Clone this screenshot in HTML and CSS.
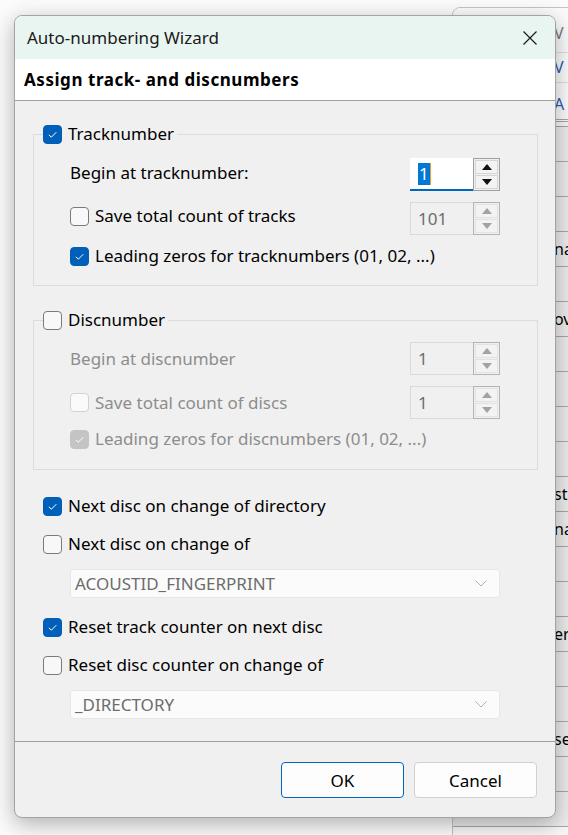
FILE: index.html
```html
<!DOCTYPE html>
<html lang="en">

<head>
    <meta charset="utf-8">
    <meta name="viewport" content="width=device-width, initial-scale=1.0">
    <title>Auto-numbering Wizard</title>
    <link rel="stylesheet" href="styles.css">
</head>

<body>

    <!-- window behind the dialog, only a strip of it is visible -->
    <div class="backwin">
        <div class="bw-head">
            <div class="bw-line bw-first"><span class="grey">V</span></div>
            <div class="bw-line"><span class="blue">V</span></div>
            <div class="bw-line bw-tool"><span class="blue">A</span></div>
        </div>
        <div class="bw-list">
            <div class="bw-row"></div>
            <div class="bw-row"></div>
            <div class="bw-row"></div>
            <div class="bw-row"><span>na</span></div>
            <div class="bw-row"></div>
            <div class="bw-row"><span>ov</span></div>
            <div class="bw-row"></div>
            <div class="bw-row"></div>
            <div class="bw-row"></div>
            <div class="bw-row"></div>
            <div class="bw-row"><span>st</span></div>
            <div class="bw-row"><span>na</span></div>
            <div class="bw-row"></div>
            <div class="bw-row"></div>
            <div class="bw-row"><span>er</span></div>
            <div class="bw-row"></div>
            <div class="bw-row"></div>
            <div class="bw-row"><span>se</span></div>
            <div class="bw-row"></div>
            <div class="bw-row"></div>
        </div>
        <div class="bw-panel"></div>
    </div>

    <div class="dialog">
        <div class="titlebar">
            <span>Auto-numbering Wizard</span>
            <svg class="close" width="16" height="16" viewBox="0 0 16 16">
                <path d="M1.5 1.5 L14.5 14.5 M14.5 1.5 L1.5 14.5" stroke="#1a1a1a" stroke-width="1.2" fill="none" />
            </svg>
        </div>

        <div class="banner">Assign track- and discnumbers</div>

        <div class="content">
            <fieldset class="group group-track">
                <legend>
                    <span class="check"><span class="box on"><svg width="19" height="19" viewBox="0 0 19 19"><path d="M5.8 9.8 L8.3 12.2 L13.3 7.2" stroke="#fff" stroke-width="1" fill="none" /></svg></span>Tracknumber</span>
                </legend>
                <div class="rows">
                    <div class="row">
                        <span class="label">Begin at tracknumber:</span>
                        <div class="spin">
                            <div class="spin-input active"><span class="sel">1</span></div>
                            <div class="spin-btns">
                                <span class="sbtn"><svg width="10" height="6" viewBox="0 0 10 6"><polygon points="0,6 5,0 10,6" fill="#111" /></svg></span>
                                <span class="sbtn"><svg width="10" height="6" viewBox="0 0 10 6"><polygon points="0,0 5,6 10,0" fill="#111" /></svg></span>
                            </div>
                        </div>
                    </div>
                    <div class="row row-gap">
                        <span class="check"><span class="box"></span>Save total count of tracks</span>
                        <div class="spin off">
                            <div class="spin-input">101</div>
                            <div class="spin-btns">
                                <span class="sbtn"><svg width="10" height="6" viewBox="0 0 10 6"><polygon points="0,6 5,0 10,6" fill="#a3a3a3" /></svg></span>
                                <span class="sbtn"><svg width="10" height="6" viewBox="0 0 10 6"><polygon points="0,0 5,6 10,0" fill="#a3a3a3" /></svg></span>
                            </div>
                        </div>
                    </div>
                    <div class="row row-last">
                        <span class="check"><span class="box on"><svg width="19" height="19" viewBox="0 0 19 19"><path d="M5.8 9.8 L8.3 12.2 L13.3 7.2" stroke="#fff" stroke-width="1" fill="none" /></svg></span>Leading zeros for tracknumbers (01, 02, ...)</span>
                    </div>
                </div>
            </fieldset>

            <fieldset class="group group-disc">
                <legend>
                    <span class="check"><span class="box"></span>Discnumber</span>
                </legend>
                <div class="rows disabled">
                    <div class="row">
                        <span class="label">Begin at discnumber</span>
                        <div class="spin off">
                            <div class="spin-input">1</div>
                            <div class="spin-btns">
                                <span class="sbtn"><svg width="10" height="6" viewBox="0 0 10 6"><polygon points="0,6 5,0 10,6" fill="#a3a3a3" /></svg></span>
                                <span class="sbtn"><svg width="10" height="6" viewBox="0 0 10 6"><polygon points="0,0 5,6 10,0" fill="#a3a3a3" /></svg></span>
                            </div>
                        </div>
                    </div>
                    <div class="row row-gap">
                        <span class="check"><span class="box"></span>Save total count of discs</span>
                        <div class="spin off">
                            <div class="spin-input">1</div>
                            <div class="spin-btns">
                                <span class="sbtn"><svg width="10" height="6" viewBox="0 0 10 6"><polygon points="0,6 5,0 10,6" fill="#a3a3a3" /></svg></span>
                                <span class="sbtn"><svg width="10" height="6" viewBox="0 0 10 6"><polygon points="0,0 5,6 10,0" fill="#a3a3a3" /></svg></span>
                            </div>
                        </div>
                    </div>
                    <div class="row row-last">
                        <span class="check"><span class="box on"><svg width="19" height="19" viewBox="0 0 19 19"><path d="M5.8 9.8 L8.3 12.2 L13.3 7.2" stroke="#fff" stroke-width="1" fill="none" /></svg></span>Leading zeros for discnumbers (01, 02, ...)</span>
                    </div>
                </div>
            </fieldset>

            <div class="opt opt-first">
                <span class="check"><span class="box on"><svg width="19" height="19" viewBox="0 0 19 19"><path d="M5.8 9.8 L8.3 12.2 L13.3 7.2" stroke="#fff" stroke-width="1" fill="none" /></svg></span>Next disc on change of directory</span>
            </div>
            <div class="opt">
                <span class="check"><span class="box"></span>Next disc on change of</span>
            </div>
            <div class="combo">
                <span>ACOUSTID_FINGERPRINT</span>
                <svg width="12" height="7" viewBox="0 0 12 7"><path d="M0.5 0.5 L6 6 L11.5 0.5" stroke="#b0b0b0" stroke-width="1" fill="none" /></svg>
            </div>
            <div class="opt opt-after">
                <span class="check"><span class="box on"><svg width="19" height="19" viewBox="0 0 19 19"><path d="M5.8 9.8 L8.3 12.2 L13.3 7.2" stroke="#fff" stroke-width="1" fill="none" /></svg></span>Reset track counter on next disc</span>
            </div>
            <div class="opt">
                <span class="check"><span class="box"></span>Reset disc counter on change of</span>
            </div>
            <div class="combo">
                <span>_DIRECTORY</span>
                <svg width="12" height="7" viewBox="0 0 12 7"><path d="M0.5 0.5 L6 6 L11.5 0.5" stroke="#b0b0b0" stroke-width="1" fill="none" /></svg>
            </div>
        </div>

        <div class="footer">
            <button class="btn btn-default">OK</button>
            <button class="btn">Cancel</button>
        </div>
    </div>

</body>

</html>
```

FILE: styles.css
```css
html,
body {
    margin: 0;
    height: 100%;
    overflow: hidden;
}

body {
    position: relative;
    background-color: #fbfbfb;
    font-family: "Noto Sans", "Open Sans", sans-serif;
    font-size: 17px;
    color: #000;
}

/* window in the background */
.backwin {
    position: absolute;
    left: 452px;
    top: 7px;
    width: 115px;
    height: 860px;
    overflow: hidden;
    background-color: #f7f7f7;
    border: 1px solid #c4c4c4;
    border-radius: 8px 0 0 0;
    font-size: 16px;
}

.bw-head {
    background-color: #fbfbfb;
    border-bottom: 3px double #a6a6a6;
}

.bw-line {
    height: 29px;
    padding-left: 101px;
    line-height: 29px;
    border-bottom: 1px solid #dedede;
}

.bw-first {
    height: 44px;
    line-height: 50px;
}

.bw-tool {
    height: 36px;
    line-height: 42px;
    border-bottom: none;
}

.grey {
    color: #777;
}

.blue {
    color: #2a5db0;
}

.bw-list {
    margin-top: 4px;
    border-top: 1px solid #a6a6a6;
}

.bw-row {
    height: 34px;
    padding-left: 101px;
    line-height: 34px;
    background-color: #ececec;
    border-bottom: 1px solid #a8a8a8;
}

/* dialog */
.dialog {
    position: absolute;
    left: 14px;
    top: 15px;
    width: 542px;
    height: 803px;
    box-sizing: border-box;
    display: flex;
    flex-direction: column;
    background-color: #f0f0f0;
    border: 1px solid #a3a3a3;
    border-radius: 8px;
    overflow: hidden;
    box-shadow: 0 6px 22px rgba(0, 0, 0, 0.3);
}

.titlebar {
    height: 43px;
    display: flex;
    align-items: center;
    justify-content: space-between;
    padding: 0 17px 0 12px;
    background-color: #e9f5f0;
    color: #1a1a1a;
}

.close {
    display: block;
}

.banner {
    height: 41px;
    line-height: 41px;
    padding-left: 9px;
    background-color: #fff;
    border-bottom: 1px solid #a0a0a0;
    font-weight: bold;
    letter-spacing: 0.55px;
}

.content {
    flex: 1;
    padding: 0 17px 0 18px;
}

.group {
    margin: 22px 0 0 0;
    padding: 0;
    border: 1px solid #dcdcdc;
    min-width: 0;
}

.group legend {
    margin-left: 9px;
    padding: 0 3px 0 0;
    line-height: 22px;
}

.group-disc {
    margin-top: 23px;
}

.rows {
    padding: 13px 37px 18px 36px;
}

.group-disc .rows {
    padding-top: 11px;
    padding-bottom: 19px;
}

.row {
    height: 33px;
    display: flex;
    align-items: center;
    justify-content: space-between;
}

.group-track .row > .label,
.group-track .row > .check {
    margin-bottom: 5px;
}

.group-track .row-last > .check {
    margin-bottom: 0;
}

.row-gap {
    margin-top: 11px;
}

.row-last {
    height: 22px;
    margin-top: 10px;
}

.group-disc .row-last {
    margin-top: 9px;
}

.disabled .label,
.disabled .check {
    color: #8d8d8d;
}

.check {
    display: flex;
    align-items: center;
    gap: 6px;
    line-height: 22px;
}

.box {
    width: 19px;
    height: 19px;
    box-sizing: border-box;
    border: 1px solid #7a7a7a;
    border-radius: 4px;
    background-color: #f8f8f8;
}

.box svg {
    display: block;
    margin: -1px;
}

.box.on {
    border-color: #005fb8;
    background-color: #005fb8;
}

.disabled .box {
    border-color: #d2d2d2;
    background-color: #fafafa;
}

.disabled .box.on {
    border-color: #c4c4c4;
    background-color: #c4c4c4;
}

/* spin boxes */
.spin {
    display: flex;
    height: 33px;
}

.spin-input {
    width: 63px;
    box-sizing: border-box;
    padding-left: 7px;
    display: flex;
    align-items: center;
    background-color: #f0f0f0;
    border: 1px solid #dadada;
    border-right: none;
    color: #6d6d6d;
}

.spin-input.active {
    background-color: #fff;
    border: none;
    border-bottom: 2px solid #0067c0;
    padding-left: 8px;
}

.sel {
    background-color: #0078d4;
    color: #fff;
    padding: 0 1px;
    line-height: 22px;
    box-shadow: 1px 0 0 #f39a2b;
}

.spin-btns {
    width: 27px;
    box-sizing: border-box;
    display: flex;
    flex-direction: column;
    gap: 1px;
    padding: 1px;
    border: 1px solid #a0a0a0;
}

.sbtn {
    flex: 1;
    display: flex;
    align-items: center;
    justify-content: center;
    background-color: #f3f3f3;
    border: 1px solid #d5d5d5;
}

.off .spin-btns {
    border-color: #b4b4b4;
}

.off .sbtn {
    border-color: #e2e2e2;
}

/* options under the groups */
.opt {
    height: 22px;
    margin: 16px 0 0 10px;
}

.opt-first {
    margin-top: 25px;
}

.opt-after {
    margin-top: 18px;
}

.combo {
    margin: 14px 38px 0 37px;
    height: 29px;
    box-sizing: border-box;
    display: flex;
    align-items: center;
    justify-content: space-between;
    padding: 0 12px 0 4px;
    background-color: #fbfbfb;
    border: 1px solid #e7e7e7;
    border-radius: 3px;
    color: #6d6d6d;
}

.combo:last-child {
    margin-top: 14px;
}

/* buttons */
.footer {
    height: 76px;
    box-sizing: border-box;
    border-top: 1px solid #9e9e9e;
    display: flex;
    justify-content: flex-end;
    align-items: flex-start;
    gap: 10px;
    padding: 20px 18px 0 0;
}

.btn {
    width: 123px;
    height: 36px;
    font-family: "Noto Sans", "Open Sans", sans-serif;
    font-size: 17px;
    color: #000;
    background-color: #fdfdfd;
    border: 1px solid #d0d0d0;
    border-radius: 4px;
}

.btn-default {
    border-color: #0067c0;
}
```
